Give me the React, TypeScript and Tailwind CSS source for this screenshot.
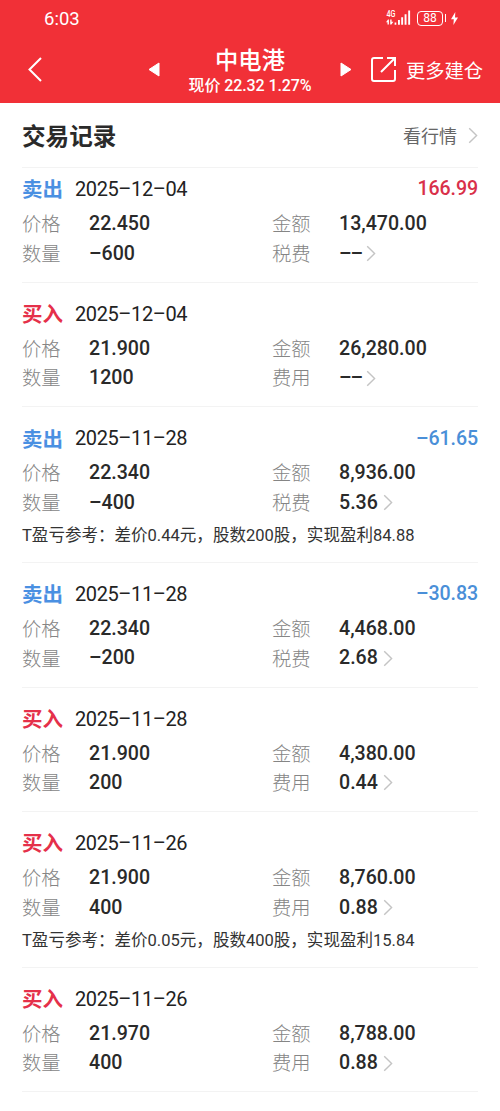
type Trade = {
  side: '买入' | '卖出';
  date: string;
  price: string;
  quantity: string;
  amount: string;
  fee: string;
  profit?: string;
  note?: string;
};

const trades: Trade[] = [
  { side: '卖出', date: '2025–12–04', price: '22.450', quantity: '–600', amount: '13,470.00', fee: '––', profit: '166.99' },
  { side: '买入', date: '2025–12–04', price: '21.900', quantity: '1200', amount: '26,280.00', fee: '––' },
  { side: '卖出', date: '2025–11–28', price: '22.340', quantity: '–400', amount: '8,936.00', fee: '5.36', profit: '–61.65', note: 'T盈亏参考：差价0.44元，股数200股，实现盈利84.88' },
  { side: '卖出', date: '2025–11–28', price: '22.340', quantity: '–200', amount: '4,468.00', fee: '2.68', profit: '–30.83' },
  { side: '买入', date: '2025–11–28', price: '21.900', quantity: '200', amount: '4,380.00', fee: '0.44' },
  { side: '买入', date: '2025–11–26', price: '21.900', quantity: '400', amount: '8,760.00', fee: '0.88', note: 'T盈亏参考：差价0.05元，股数400股，实现盈利15.84' },
  { side: '买入', date: '2025–11–26', price: '21.970', quantity: '400', amount: '8,788.00', fee: '0.88' },
];

function Chevron({ className }: { className: string }) {
  return (
    <svg className={className} viewBox="0 0 10 18" fill="none" stroke="currentColor" strokeWidth="1.5">
      <path d="M1 1.2 8.8 9 1 16.8" />
    </svg>
  );
}

function Field({ label, value, link }: { label: string; value: string; link?: boolean }) {
  return (
    <div className="flex h-[29.5px] items-center">
      <span className="w-[67px] shrink-0 pt-[2px] text-[19.3px] font-light leading-none text-[#858585]">{label}</span>
      <span className={`text-[19.6px] font-medium leading-none text-[#2a2a2a] ${value === '––' ? 'tracking-[-1px]' : ''}`}>{value}</span>
      {link && <Chevron className={`h-[17px] w-[10px] text-[#c4c4c4] ${value === '––' ? 'ml-1' : 'ml-[5px]'}`} />}
    </div>
  );
}

function TradeItem({ trade, first }: { trade: Trade; first: boolean }) {
  const height = first ? 'h-[115.2px] pt-[6.5px]' : trade.note ? 'h-[155.6px] pt-4' : 'h-[124.6px] pt-4';
  return (
    <li className={`${height} border-b border-[#f3f3f3]`}>
      <div className="flex h-[30px] items-center">
        <span className={`w-[53px] pt-[3px] text-[20.5px] font-bold leading-none ${trade.side === '卖出' ? 'text-[#4a90e2]' : 'text-[#e5304a]'}`}>
          {trade.side}
        </span>
        <span className="text-[20px] leading-none tracking-[-0.4px] text-[#222]">{trade.date}</span>
        {trade.profit && (
          <span className={`ml-auto text-[19.6px] font-medium leading-none tracking-[-0.1px] ${trade.profit.startsWith('–') ? 'text-[#4a8fd8]' : 'text-[#d9304a]'}`}>
            {trade.profit}
          </span>
        )}
      </div>
      <div className="mt-[5px] grid grid-cols-[250px_1fr]">
        <Field label="价格" value={trade.price} />
        <Field label="金额" value={trade.amount} />
        <Field label="数量" value={trade.quantity} />
        <Field label={trade.side === '卖出' ? '税费' : '费用'} value={trade.fee} link />
      </div>
      {trade.note && <p className="mt-2 whitespace-nowrap text-[16.55px] leading-[22px] text-[#333]">{trade.note}</p>}
    </li>
  );
}

function StatusBar() {
  return (
    <div className="flex h-9 items-center justify-between pl-11 pr-[42px] text-white">
      <span className="pt-[3px] text-[18.5px] leading-none">6:03</span>
      <div className="flex items-center">
        <svg className="h-[18px] w-[26px]" viewBox="0 0 26 18" fill="currentColor">
          <text x="0.5" y="7.8" fontSize="9" fontWeight="500" textLength="9" lengthAdjust="spacingAndGlyphs">4G</text>
          <path d="M2 10.5 0 13.3h1.5v2.2h1.4v-5ZM4.2 10.5v5h1.2l2-2.8H5.6v-2.2ZM8.6 13.4h1.7v2.3H8.6zM12 11h1.9v4.7H12zM15.2 8.2h1.9v7.5h-1.9zM18.6 5.2h1.9v10.5h-1.9zM22.2 1.5h1.9v14.2h-1.9z" />
        </svg>
        <span className="ml-[5px] flex h-[15px] w-[26px] items-center justify-center rounded-[4px] border border-white text-[12px] leading-none">88</span>
        <span className="ml-[2px] h-2 w-px bg-white" />
        <svg className="ml-[5px] h-[13px] w-[7px]" viewBox="0 0 7 13" fill="currentColor">
          <path d="M4.3 0 0 7.3h2.8L2.4 13 7 5.4H4Z" />
        </svg>
      </div>
    </div>
  );
}

export default function App() {
  return (
    <main className="h-[1111px] w-[500px] overflow-hidden bg-white font-[Roboto,'Noto_Sans_CJK_SC',sans-serif]">
      <header className="h-[103px] bg-[#f13037] text-white">
        <StatusBar />
        <div className="flex h-[67px] items-center pl-7">
          <svg className="h-[26px] w-[14px]" viewBox="0 0 14 26" fill="none" stroke="currentColor" strokeWidth="2">
            <path d="M13 1 1.5 12.5 13 24" />
          </svg>
          <svg className="ml-[106px] h-[15px] w-3" viewBox="0 0 12 15" fill="currentColor" stroke="currentColor" strokeLinejoin="round">
            <path d="M11 1v13L1 7.5Z" />
          </svg>
          <div className="flex w-[180px] flex-col items-center pt-[5px]">
            <h1 className="text-[23.3px] font-medium leading-[28px]">中电港</h1>
            <p className="whitespace-nowrap text-[16px] font-medium leading-[22px] tracking-[-0.1px]">现价 22.32 1.27%</p>
          </div>
          <svg className="h-[15px] w-3" viewBox="0 0 12 15" fill="currentColor" stroke="currentColor" strokeLinejoin="round">
            <path d="M1 1v13l10-6.5Z" />
          </svg>
          <svg className="ml-[18px] h-[27px] w-[27px]" viewBox="0 0 27 27" fill="none" stroke="currentColor" strokeWidth="2">
            <path d="M13 2H4Q2 2 2 4v19q0 2 2 2h19q2 0 2-2V14M11 16 25 2M17 2h8v8" />
          </svg>
          <span className="ml-[9px] whitespace-nowrap pt-[4px] text-[19.3px] leading-none">更多建仓</span>
        </div>
      </header>
      <section className="px-[22px]">
        <div className="flex h-[64.6px] items-center justify-between border-b border-[#f3f3f3]">
          <h2 className="pt-[6px] text-[23.6px] font-bold leading-none text-[#2a2a2a]">交易记录</h2>
          <a className="flex items-center pt-[2px] text-[18px] leading-none text-[#666]">
            <span className="pt-[2px]">看行情</span>
            <Chevron className="ml-[11px] h-[17px] w-[10px] text-[#c4c4c4]" />
          </a>
        </div>
        <ul>
          {trades.map((trade, index) => (
            <TradeItem key={index} trade={trade} first={index === 0} />
          ))}
        </ul>
      </section>
    </main>
  );
}
